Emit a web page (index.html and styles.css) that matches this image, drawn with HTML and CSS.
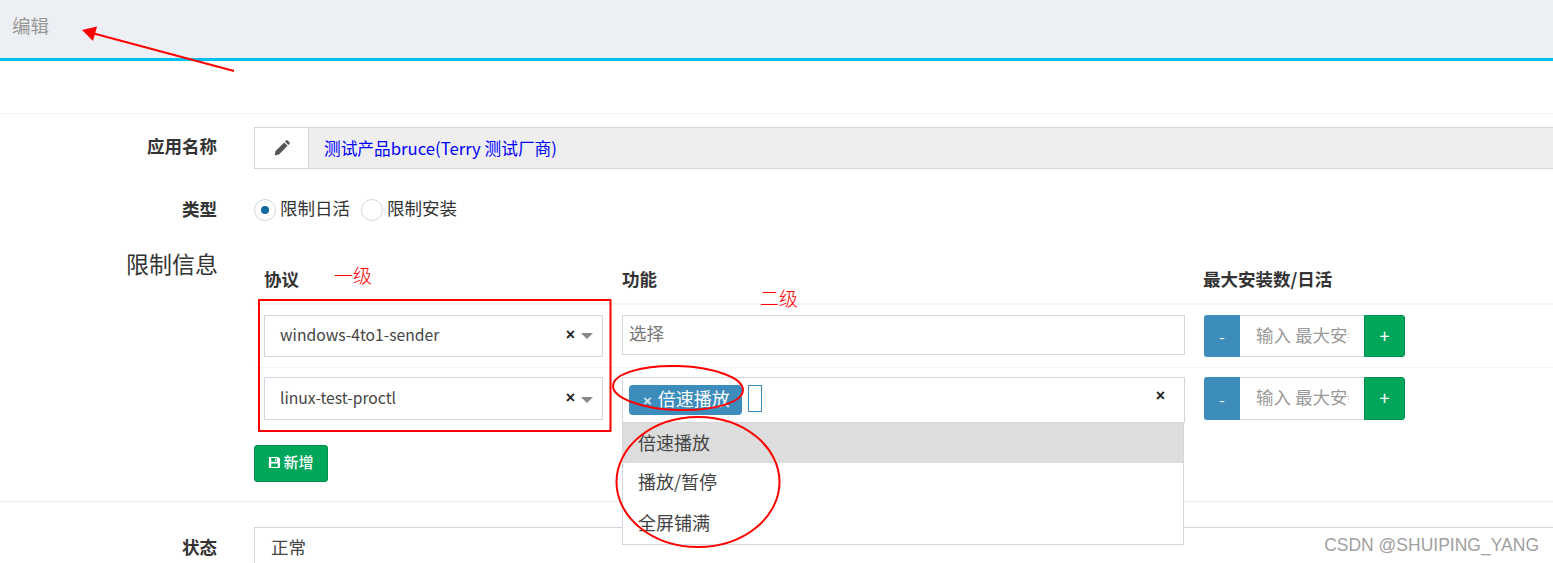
FILE: index.html
```html
<!DOCTYPE html>
<html lang="zh">
<head>
<meta charset="utf-8">
<title>编辑</title>
<link rel="stylesheet" href="styles.css">
</head>
<body>
<header class="head"><span class="head-title">编辑</span></header>
<div class="spacer"></div>
<main class="form">
  <div class="row">
    <label class="label">应用名称</label>
    <div class="field-group">
      <span class="addon">
        <svg class="pencil" viewBox="0 0 16 16" width="16" height="16"><path fill="#555" d="M0.600 15.400l1-4.400L10.200 2.400l3.400 3.400L5 14.400zM11 1.600l1-1c.5-.5 1.200-.5 1.700 0l1.700 1.700c.5.5.5 1.200 0 1.700l-1 1z"/></svg>
      </span>
      <span class="readonly">测试产品bruce(Terry 测试厂商)</span>
    </div>
  </div>
  <div class="row row-type">
    <label class="label">类型</label>
    <div class="radios">
      <span class="radio radio-on"></span><span class="radio-text">限制日活</span>
      <span class="radio"></span><span class="radio-text">限制安装</span>
    </div>
  </div>
  <div class="row row-limit">
    <label class="label label-big">限制信息</label>
    <div class="limit">
      <div class="table-row table-head">
        <div class="th">协议</div><div class="th">功能</div><div class="th">最大安装数/日活</div>
      </div>
      <div class="table-row body-row first">
        <div class="cell">
          <div class="select"><span class="select-text">windows-4to1-sender</span><span class="clear">×</span><span class="caret"></span></div>
        </div>
        <div class="cell"><div class="multi multi-empty"><span class="placeholder">选择</span></div></div>
        <div class="cell">
          <div class="stepper"><button class="step minus">-</button><span class="step-input"><span class="step-ph">输入 最大安装数/日活</span></span><button class="step plus">+</button></div>
        </div>
      </div>
      <div class="table-row body-row second">
        <div class="cell">
          <div class="select select-tall"><span class="select-text">linux-test-proctl</span><span class="clear">×</span><span class="caret"></span></div>
        </div>
        <div class="cell">
          <div class="multi multi-open">
            <span class="tag"><span class="tag-x">×</span>倍速播放</span>
            <span class="cursor"></span>
            <span class="clear clear-multi">×</span>
            <ul class="dropdown">
              <li class="option option-hl">倍速播放</li>
              <li class="option">播放/暂停</li>
              <li class="option option-last">全屏铺满</li>
            </ul>
          </div>
        </div>
        <div class="cell">
          <div class="stepper stepper-tall"><button class="step minus">-</button><span class="step-input"><span class="step-ph">输入 最大安装数/日活</span></span><button class="step plus">+</button></div>
        </div>
      </div>
      <button class="add">
        <svg viewBox="0 0 14 14" width="13" height="13"><path fill="#fff" fill-rule="evenodd" d="M1 1h10l2 2v10H1zM3.500 2.200v4h6v-4zM7.500 2.800h1.300v2.500H7.500zM3.500 8.200v3.600h7V8.200z"/></svg>新增
      </button>
    </div>
  </div>
  <div class="row row-status">
    <label class="label label-status">状态</label>
    <div class="status-select">正常</div>
  </div>
</main>
<svg class="marks" width="1553" height="563" viewBox="0 0 1553 563">
  <path d="M234 71L92 33" stroke="#f00" stroke-width="2" fill="none"/>
  <path d="M82 30L97 26.500L93 41z" fill="#f00"/>
  <rect x="259" y="300" width="351.500" height="131" fill="none" stroke="#f00" stroke-width="2"/>
  <ellipse cx="678" cy="388" rx="65" ry="22" fill="none" stroke="#f00" stroke-width="2" transform="rotate(2 678 388)"/>
  <ellipse cx="698" cy="482" rx="81.500" ry="65" fill="none" stroke="#f00" stroke-width="2"/>
</svg>
<span class="note note-one">一级</span>
<span class="note note-two">二级</span>
<span class="watermark">CSDN @SHUIPING_YANG</span>
</body>
</html>
```
FILE: styles.css
```css
* { box-sizing: border-box; }
html, body { margin: 0; height: 563px; overflow: hidden; }
body {
  position: relative;
  background: #fff;
  color: #333;
  font-family: "Noto Sans CJK SC", "Noto Sans", sans-serif;
  font-size: 17.500px;
  line-height: 24px;
}
.head {
  height: 61px;
  background: #ecf0f5;
  border-bottom: 3px solid #00c0ef;
  display: flex;
  align-items: center;
  padding: 0 0 8px 12px;
}
.head-title { color: #9b9794; font-size: 18.500px; }
.spacer { height: 53px; border-bottom: 1px solid #f4f4f4; }
.form { padding-top: 13px; }
.row { display: flex; gap: 37px; }
.label {
  flex: 0 0 217px;
  text-align: right;
  font-weight: 700;
  line-height: 38px;
}
.label-status { line-height: 40px; }
.label-big { font-weight: 400; font-size: 23px; line-height: 26px; flex-basis: 218px; margin-right: -1px; }
.field-group { display: flex; height: 42px; flex: 1; margin-right: -4px; }
.addon {
  width: 55px;
  border: 1px solid #d2d6de;
  display: flex;
  align-items: center;
  justify-content: center;
  background: #fff;
}
.readonly {
  flex: 1;
  background: #eee;
  border: 1px solid #d2d6de;
  border-left: 0;
  color: #00f;
  line-height: 41px;
  padding-left: 15px;
  font-size: 16.700px;
}
.row-type { margin-top: 29px; height: 24px; }
.row-type .label { line-height: 21px; }
.radios { display: flex; align-items: center; }
.radio {
  width: 22px;
  height: 22px;
  border-radius: 50%;
  border: 1px solid #d2d6de;
  background: #fff;
  display: flex;
  align-items: center;
  justify-content: center;
}
.radio-on::after {
  content: "";
  width: 8px;
  height: 8px;
  border-radius: 50%;
  background: #11699e;
}
.radio-on + .radio-text { margin-right: 11px; }
.radio-text { margin: 0 10px 4px 4px; }
.row-limit { margin-top: 28px; border-bottom: 1px solid #eee; height: 252px; }
.limit { flex: 1; margin-right: -10px; }
.table-row { display: grid; grid-template-columns: 358px 582px 1fr; }
.table-head { height: 55px; border-bottom: 2px solid #f4f4f4; align-items: end; }
.th { font-weight: 700; padding: 0 10px 12px; }
.th:last-child { padding-left: 9px; }
.body-row { border-bottom: 1px solid #f4f4f4; padding-top: 10px; height: 63px; }
.body-row.second { padding-top: 9px; border-bottom: 0; height: 75px; }
.cell { padding: 0 10px 0; position: relative; }
.cell:first-child { padding-right: 9px; }
.select {
  height: 42px;
  border: 1px solid #d2d6de;
  display: flex;
  align-items: center;
  padding: 0 9px 3px 15px;
  color: #444;
}
.select-tall { height: 43px; padding-bottom: 1px; }
.select-text { flex: 1; font-size: 15.700px; }
.clear {
  color: #222;
  font-family: "Liberation Sans", sans-serif;
  font-weight: 700;
  font-size: 16px;
  line-height: 1;
}
.caret {
  margin-left: 6px;
  margin-top: 3px;
  width: 0;
  height: 0;
  border: 6px solid transparent;
  border-top: 6px solid #888;
  border-bottom: 0;
}
.multi {
  border: 1px solid #d2d6de;
  display: flex;
  align-items: flex-start;
  position: relative;
  margin-right: -1px;
}
.multi-empty { height: 40px; padding: 5px 6px; }
.placeholder { color: #777; }
.multi-open { height: 46px; padding: 7px 6px; }
.tag {
  background: #3c8dbc;
  color: #fff;
  height: 30px;
  width: 113px;
  line-height: 27px;
  border-radius: 4px;
  padding-left: 14px;
  white-space: nowrap;
  font-size: 18px;
}
.tag-x {
  color: rgba(255,255,255,.8);
  font-family: "Liberation Sans", sans-serif;
  font-weight: 700;
  font-size: 15px;
  margin-right: 6px;
}
.cursor { width: 14px; height: 27px; border: 1px solid #3c8dbc; margin-left: 6px; }
.clear-multi { margin-left: auto; margin-right: 13px; margin-top: 3px; }
.dropdown {
  position: absolute;
  z-index: 2;
  left: -1px;
  right: 0;
  top: 45px;
  margin: 0;
  padding: 0;
  list-style: none;
  background: #fff;
  border: 1px solid #d2d6de;
  border-top: 0;
}
.option { height: 40px; line-height: 37px; padding-left: 15px; color: #444; font-size: 18px; }
.option-hl { background: #ddd; line-height: 39px; }
.option-last { height: 41px; line-height: 39px; }
.stepper { display: flex; height: 42px; width: 201px; }
.stepper-tall { height: 43px; }
.step { border: 0; color: #fff; font: inherit; font-size: 16px; padding: 0; }
.minus { width: 36px; background: #3c8dbc; border-radius: 3px 0 0 3px; }
.plus { width: 41px; background: #00a65a; border: 1px solid #008d4c; border-radius: 0 3px 3px 0; font-size: 18px; padding-bottom: 3px; }
.step-input {
  width: 124px;
  border: 1px solid #d2d6de;
  border-width: 1px 0;
  padding: 0 15px 3px 16px;
  display: flex;
  align-items: center;
  color: #999;
}
.step-ph { overflow: hidden; white-space: nowrap; display: block; }
.add {
  display: flex;
  align-items: center;
  justify-content: center;
  gap: 2px;
  margin: 2px 0 0 0;
  width: 74px;
  height: 37px;
  background: #00a65a;
  border: 1px solid #008d4c;
  border-radius: 3px;
  color: #fff;
  font: inherit;
  font-size: 15px;
  font-weight: 500;
  padding: 0 0 3px;
}
.row-status { margin-top: 25px; }
.status-select {
  flex: 1;
  height: 42px;
  border: 1px solid #d2d6de;
  margin-right: -4px;
  padding-left: 16px;
  line-height: 38px;
  color: #444;
}
.marks { position: absolute; left: 0; top: 0; z-index: 3; pointer-events: none; }
.note {
  position: absolute;
  z-index: 3;
  color: #f00;
  font-size: 19px;
  line-height: 24px;
  font-family: "Noto Sans CJK SC", sans-serif;
  font-weight: 300;
}
.note-one { left: 334px; top: 263px; }
.note-two { left: 760px; top: 286px; }
.watermark {
  position: absolute;
  z-index: 4;
  right: 14px;
  top: 533px;
  font-family: "Liberation Sans", sans-serif;
  font-size: 17.500px;
  line-height: 24px;
  color: #a0a0a0;
}
```
